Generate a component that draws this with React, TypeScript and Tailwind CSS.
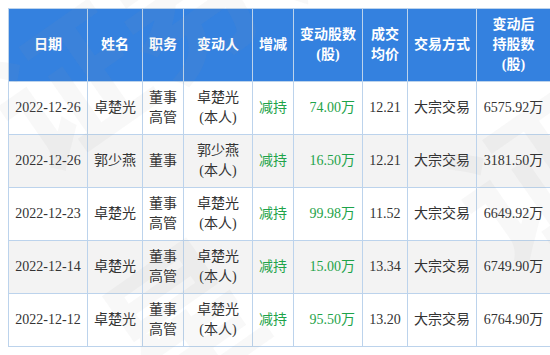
import React from "react";

type Row = {
  date: string;
  name: string;
  role: string[];
  person: string;
  change: string;
  shares: string;
  price: string;
  method: string;
  after: string;
};

const rows: Row[] = [
  { date: "2022-12-26", name: "卓楚光", role: ["董事", "高管"], person: "卓楚光", change: "减持", shares: "74.00万", price: "12.21", method: "大宗交易", after: "6575.92万" },
  { date: "2022-12-26", name: "郭少燕", role: ["董事"], person: "郭少燕", change: "减持", shares: "16.50万", price: "12.21", method: "大宗交易", after: "3181.50万" },
  { date: "2022-12-23", name: "卓楚光", role: ["董事", "高管"], person: "卓楚光", change: "减持", shares: "99.98万", price: "11.52", method: "大宗交易", after: "6649.92万" },
  { date: "2022-12-14", name: "卓楚光", role: ["董事", "高管"], person: "卓楚光", change: "减持", shares: "15.00万", price: "13.34", method: "大宗交易", after: "6749.90万" },
  { date: "2022-12-12", name: "卓楚光", role: ["董事", "高管"], person: "卓楚光", change: "减持", shares: "95.50万", price: "13.20", method: "大宗交易", after: "6764.90万" },
];

const th = "border border-[#bcd3ec] px-1 text-center align-middle font-bold text-white";
const td = "border border-[#bcd3ec] px-1 text-center align-middle";

export default function App() {
  return (
    <div
      className="relative h-[355px] w-[550px] overflow-hidden bg-white text-[14px] leading-[20px] text-[#333]"
      style={{ fontFamily: '"Liberation Serif", "Noto Sans CJK SC", serif' }}
    >
      <table className="ml-[8px] mt-[8px] w-[542px] table-fixed border-collapse">
        <colgroup>
          <col className="w-[79px]" />
          <col className="w-[55px]" />
          <col className="w-[41px]" />
          <col className="w-[69px]" />
          <col className="w-[41px]" />
          <col className="w-[69px]" />
          <col className="w-[45px]" />
          <col className="w-[69px]" />
          <col className="w-[74px]" />
        </colgroup>
        <thead>
          <tr className="h-[73px] bg-[#3481df]">
            <th className={th}>日期</th>
            <th className={th}>姓名</th>
            <th className={th}>职务</th>
            <th className={th}>变动人</th>
            <th className={th}>增减</th>
            <th className={th}>变动股数<br />(股)</th>
            <th className={th}>成交<br />均价</th>
            <th className={th}>交易方式</th>
            <th className={th}>变动后<br />持股数<br />(股)</th>
          </tr>
        </thead>
        <tbody>
          {rows.map((r, i) => (
            <tr key={i} className={`h-[53px] ${i % 2 === 1 ? "bg-[#f3f3f3]" : "bg-white"}`}>
              <td className={td}>{r.date}</td>
              <td className={td}>{r.name}</td>
              <td className={td}>
                {r.role.map((x) => (
                  <div key={x}>{x}</div>
                ))}
              </td>
              <td className={td}>
                {r.person}
                <br />
                (本人)
              </td>
              <td className={`${td} text-[#1ea34a]`}>{r.change}</td>
              <td className={`${td} !text-right !pr-[7px] text-[#1ea34a]`}>{r.shares}</td>
              <td className={td}>{r.price}</td>
              <td className={td}>{r.method}</td>
              <td className={td}>{r.after}</td>
            </tr>
          ))}
        </tbody>
      </table>

      {/* faint diagonal watermark */}
      <div
        aria-hidden="true"
        className="pointer-events-none absolute inset-0 select-none font-bold text-[rgba(150,150,150,0.07)]"
      >
        <span className="absolute left-[10px] top-[60px] origin-left -rotate-[35deg] whitespace-nowrap text-[150px] leading-none">
          证券之星
        </span>
        <span className="absolute left-[110px] top-[250px] -rotate-[35deg] whitespace-nowrap text-[150px] leading-none">
          星
        </span>
        <span className="absolute left-[460px] top-[110px] -rotate-[35deg] whitespace-nowrap text-[150px] leading-none">
          证
        </span>
      </div>
    </div>
  );
}
